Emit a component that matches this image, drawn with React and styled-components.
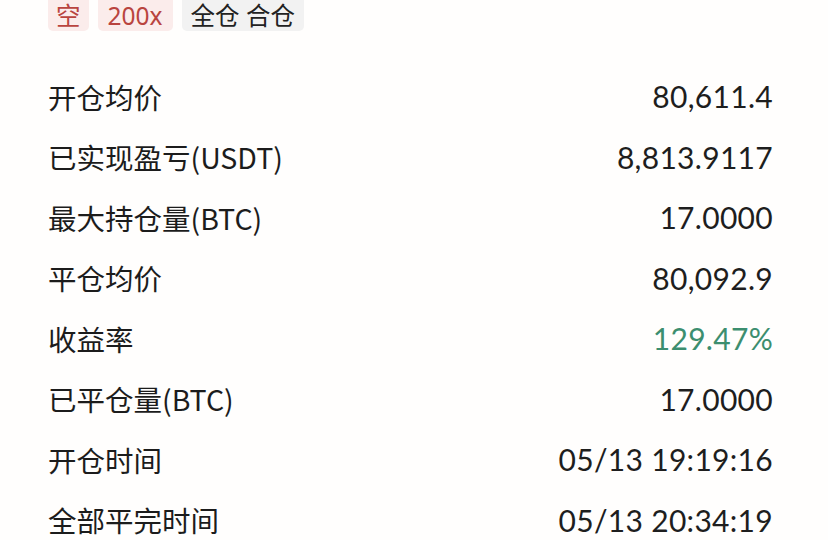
import React from 'react';
import styled, { createGlobalStyle } from 'styled-components';

const GlobalStyle = createGlobalStyle`
  body {
    margin: 0;
    background: #fffefd;
    font-family: Lato, "Noto Sans CJK SC", sans-serif;
    color: #1c1c1c;
  }
`;

const Page = styled.div`
  width: 828px;
  height: 540px;
  overflow: hidden;
  padding: 0 55px 0 48px;
  box-sizing: border-box;
`;

const TagRow = styled.div`
  display: flex;
  gap: 9px;
  margin-bottom: 35px;
`;

const Tag = styled.span`
  display: inline-flex;
  align-items: center;
  height: 31px;
  padding: 2px ${props => props.$pad || 9}px 0;
  box-sizing: border-box;
  border-radius: 0 0 5px 5px;
  background: ${props => (props.$tone === 'short' ? '#fbeceb' : '#f2f2f2')};
  color: ${props => (props.$tone === 'short' ? '#b9443f' : '#222')};
  font-family: "Noto Sans", "Noto Sans CJK SC", sans-serif;
  font-size: 24.5px;
  line-height: 1;
`;

const List = styled.div`
  display: flex;
  flex-direction: column;
`;

const Row = styled.div`
  display: flex;
  align-items: center;
  justify-content: space-between;
  height: 60.5px;
`;

const Label = styled.span`
  font-family: "Noto Sans CJK SC", sans-serif;
  font-size: 28.5px;
`;

const Value = styled.span`
  font-family: Lato, sans-serif;
  font-size: 30px;
  letter-spacing: 0.3px;
  color: ${props => (props.$positive ? '#3c8e6f' : '#1e1e1e')};
`;

const rows = [
  { label: '开仓均价', value: '80,611.4' },
  { label: '已实现盈亏(USDT)', value: '8,813.9117' },
  { label: '最大持仓量(BTC)', value: '17.0000' },
  { label: '平仓均价', value: '80,092.9' },
  { label: '收益率', value: '129.47%', positive: true },
  { label: '已平仓量(BTC)', value: '17.0000' },
  { label: '开仓时间', value: '05/13 19:19:16' },
  { label: '全部平完时间', value: '05/13 20:34:19' },
];

const App = () => (
  <>
    <GlobalStyle />
    <Page>
      <TagRow>
        <Tag $tone='short' $pad={8}>空</Tag>
        <Tag $tone='short' $pad={10}>200x</Tag>
        <Tag>全仓 合仓</Tag>
      </TagRow>
      <List>
        {rows.map(row => (
          <Row key={row.label}>
            <Label>{row.label}</Label>
            <Value $positive={row.positive}>{row.value}</Value>
          </Row>
        ))}
      </List>
    </Page>
  </>
);

export default App;
